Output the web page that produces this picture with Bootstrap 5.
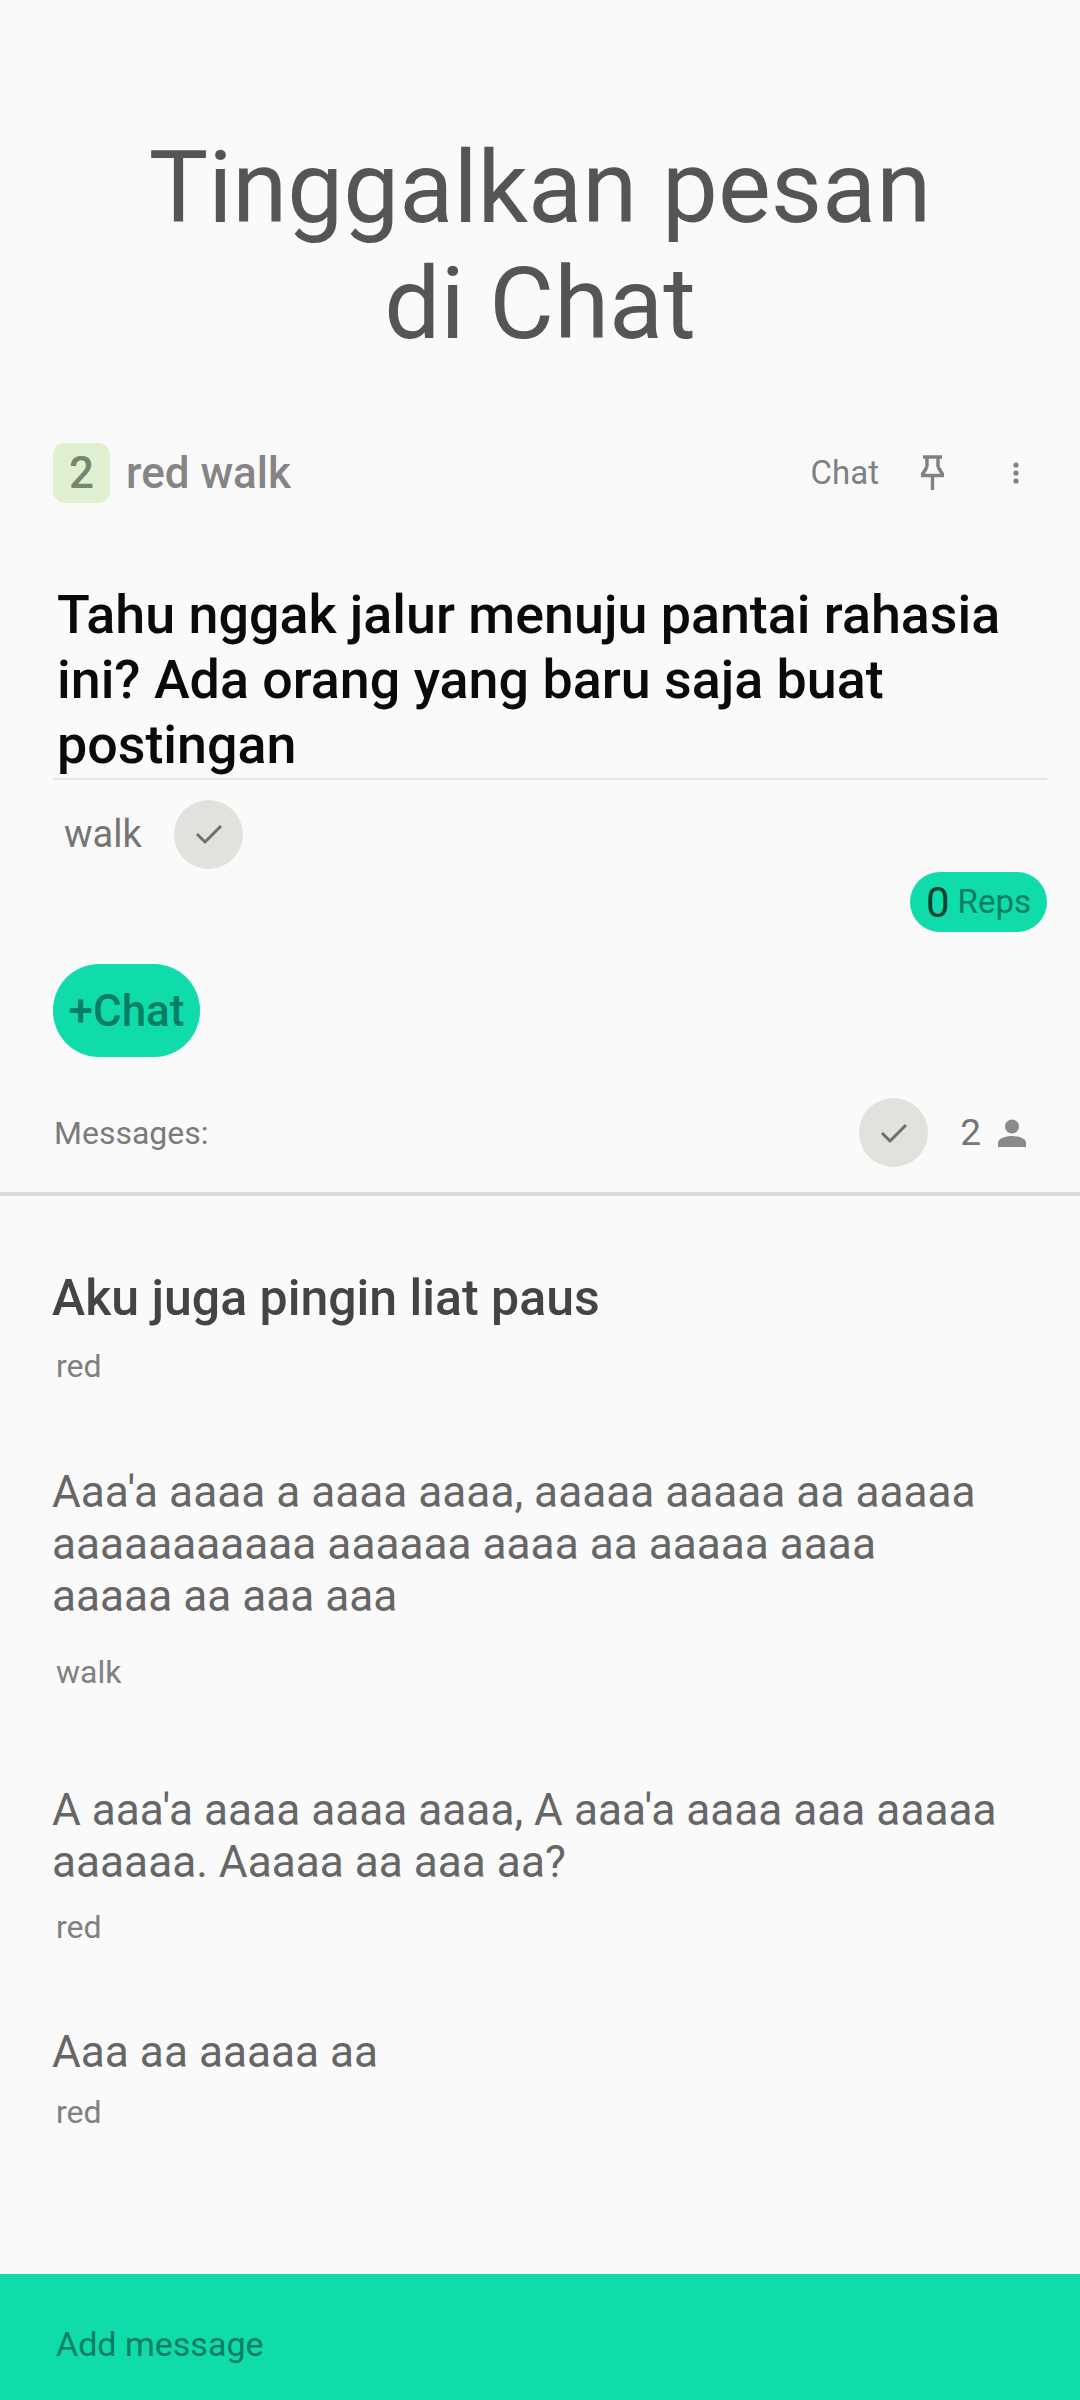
<!DOCTYPE html>
<html lang="id">
<head>
	<meta charset="UTF-8" />
	<title>Chat</title>
	<link href="https://cdn.jsdelivr.net/npm/bootstrap@5.3.3/dist/css/bootstrap.min.css" rel="stylesheet" />
	<style>
		body { background: #fafafa; font-family: Roboto, "Liberation Sans", sans-serif; color: #666; }
		.screen { height: 2400px; }
		.hero-title { padding-top: 130px; height: 400px; font-size: 99.6px; line-height: 116px; font-weight: 400; color: #555; margin: 0; }
		.head-band { height: 145px; padding: 0 53px; background: #f9f9f9; }
		.rank-chip { width: 57px; height: 60px; border-radius: 12px; background: #e0f0d0; color: #76876c; font-size: 44px; font-weight: 500; }
		.head-name { font-size: 44px; font-weight: 500; color: #858585; margin-left: 16px; }
		.head-chat { font-size: 33px; color: #808080; margin-right: 4px; }
		.pin-icon { margin-left: 36px; }
		.dots-icon { margin-left: 66px; margin-right: 7px; }
		.topic-wrap { padding: 37px 33px 0 53px; }
		.topic-text { font-size: 53.8px; line-height: 65px; font-weight: 500; color: #0a0a0a; padding-left: 4px; margin: 0; padding-bottom: 1px; border-bottom: 2px solid #e6e6e6; }
		.walk-row { height: 72px; margin-top: 18px; }
		.walk-label { font-size: 38px; color: #757575; padding-left: 11px; width: 121px; }
		.tick-disc { width: 69px; height: 69px; border-radius: 50%; background: #e3e1dc; }
		.reps-pill { width: 137px; height: 60px; border-radius: 30px; background: #10dbab; margin-top: 2px; }
		.reps-num { font-size: 42px; color: #083f31; }
		.reps-word { font-size: 33px; color: #067e63; margin-left: 8px; }
		.add-pill { width: 147px; height: 93px; border-radius: 46px; background: #10dbab; color: #067e63; font-size: 44px; font-weight: 500; margin-top: 32px; }
		.msg-head { height: 69px; margin-top: 41px; }
		.msg-label { font-size: 32px; color: #7b7b7b; padding-left: 1px; }
		.count-num { font-size: 37px; color: #757575; margin-left: 32px; }
		.person-icon { margin-left: 17px; margin-right: 21px; }
		.thick-rule { height: 4px; background: #dcdcdc; margin-top: 25px; }
		.msg-list { padding: 0 52px; }
		.msg-first { font-size: 50px; line-height: 60px; font-weight: 500; color: #444; margin-top: 72px; }
		.msg-text { font-size: 44.2px; line-height: 52px; color: #666; }
		.msg-who { font-size: 32px; line-height: 36px; color: #808080; padding-left: 4px; }
		.who-a { margin-top: 20px; }
		.who-b { margin-top: 32px; }
		.who-c { margin-top: 21px; }
		.who-d { margin-top: 16px; }
		.text-a { margin-top: 82px; }
		.text-b { margin-top: 94px; }
		.text-c { margin-top: 81px; }
		.bottom-bar { height: 126px; background: #10dbab; color: #067e63; font-size: 34px; padding: 14px 0 0 56px; }
	</style>
</head>
<body>
	<div class="screen d-flex flex-column">
		<h1 class="hero-title text-center">Tinggalkan pesan<br>di Chat</h1>

		<div class="head-band d-flex align-items-center">
			<div class="rank-chip d-flex align-items-center justify-content-center">2</div>
			<div class="head-name">red walk</div>
			<div class="head-chat ms-auto">Chat</div>
			<svg class="pin-icon" width="27" height="36" viewBox="0 0 27 36" fill="none" stroke="#808080" stroke-width="3.4">
				<path d="M4 2h19M8 2v10M19 2v10M8 12l-5 8M19 12l5 8M2 20.500h23M13.500 20v15" />
			</svg>
			<svg class="dots-icon" width="8" height="22" viewBox="0 0 8 22" fill="#808080">
				<circle cx="4" cy="3" r="2.6" /><circle cx="4" cy="11" r="2.6" /><circle cx="4" cy="19" r="2.6" />
			</svg>
		</div>

		<div class="topic-wrap">
			<p class="topic-text">Tahu nggak jalur menuju pantai rahasia ini? Ada orang yang baru saja buat postingan</p>
			<div class="walk-row d-flex align-items-center">
				<div class="walk-label">walk</div>
				<div class="tick-disc d-flex align-items-center justify-content-center">
					<svg width="28" height="22" viewBox="0 0 28 22" fill="none" stroke="#6f6f6f" stroke-width="3"><path d="M2 11l8 8L26 3" /></svg>
				</div>
			</div>
			<div class="d-flex justify-content-end">
				<div class="reps-pill d-flex align-items-center justify-content-center">
					<span class="reps-num">0</span><span class="reps-word">Reps</span>
				</div>
			</div>
			<div class="add-pill d-flex align-items-center justify-content-center">+Chat</div>
			<div class="msg-head d-flex align-items-center">
				<div class="msg-label me-auto">Messages:</div>
				<div class="tick-disc d-flex align-items-center justify-content-center">
					<svg width="28" height="22" viewBox="0 0 28 22" fill="none" stroke="#6f6f6f" stroke-width="3"><path d="M2 11l8 8L26 3" /></svg>
				</div>
				<div class="count-num">2</div>
				<svg class="person-icon" width="28" height="28" viewBox="0 0 28 28" fill="#8a8a8a">
					<circle cx="14" cy="7.500" r="7" /><path d="M0 28v-4c0-5 8-7 14-7s14 2 14 7v4z" />
				</svg>
			</div>
		</div>
		<div class="thick-rule"></div>

		<div class="msg-list flex-grow-1">
			<div class="msg-first">Aku juga pingin liat paus</div>
			<div class="msg-who who-a">red</div>
			<div class="msg-text text-a">Aaa'a aaaa a aaaa aaaa, aaaaa aaaaa aa aaaaa aaaaaaaaaaa aaaaaa aaaa aa aaaaa aaaa<br>aaaaa aa aaa aaa</div>
			<div class="msg-who who-b">walk</div>
			<div class="msg-text text-b">A aaa'a aaaa aaaa aaaa, A aaa'a aaaa aaa aaaaa aaaaaa. Aaaaa aa aaa aa?</div>
			<div class="msg-who who-c">red</div>
			<div class="msg-text text-c">Aaa aa aaaaa aa</div>
			<div class="msg-who who-d">red</div>
		</div>

		<div class="bottom-bar d-flex align-items-center">Add message</div>
	</div>
</body>
</html>
